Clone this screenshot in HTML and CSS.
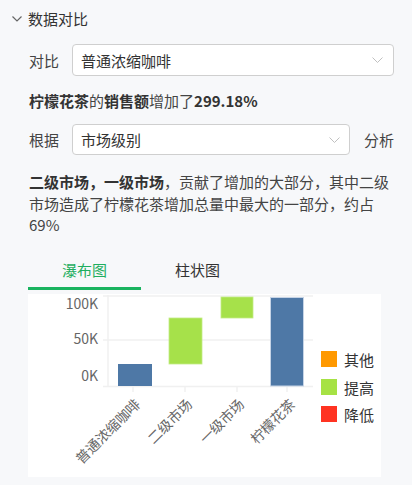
FILE: index.html
```html
<!DOCTYPE html>
<html lang="zh">
<head>
<meta charset="utf-8">
<title>数据对比</title>
<link rel="stylesheet" href="styles.css">
</head>
<body>
<div class="panel">
  <div class="header">
    <svg class="caret" width="10" height="6" viewBox="0 0 10 6"><path d="M0.5 0.5 L5 5 L9.5 0.5" fill="none" stroke="#666" stroke-width="1.2"/></svg>
    <span>数据对比</span>
  </div>

  <div class="row row-first">
    <span class="label">对比</span>
    <div class="select select-wide">
      <span>普通浓缩咖啡</span>
      <svg class="arrow" width="11" height="6" viewBox="0 0 11 6"><path d="M0.5 0.5 L5.5 5.5 L10.5 0.5" fill="none" stroke="#c0c0c0" stroke-width="1"/></svg>
    </div>
  </div>

  <p class="summary"><b>柠檬花茶</b>的<b>销售额</b>增加了<b>299.18%</b></p>

  <div class="row row-second">
    <span class="label">根据</span>
    <div class="select select-narrow">
      <span>市场级别</span>
      <svg class="arrow" width="11" height="6" viewBox="0 0 11 6"><path d="M0.5 0.5 L5.5 5.5 L10.5 0.5" fill="none" stroke="#c0c0c0" stroke-width="1"/></svg>
    </div>
    <span class="suffix">分析</span>
  </div>

  <p class="explain"><b>二级市场，一级市场</b>，贡献了增加的大部分，其中二级市场造成了柠檬花茶增加总量中最大的一部分，约占69%</p>

  <div class="tabs">
    <div class="tab active">瀑布图</div>
    <div class="tab">柱状图</div>
  </div>

  <div class="chart">
    <svg width="353" height="183" viewBox="0 0 353 183">
      <g stroke="#f0f0f0" stroke-width="1.5">
        <line x1="75" y1="2" x2="285" y2="2"/>
        <line x1="75" y1="46" x2="285" y2="46"/>
        <line x1="75" y1="92.5" x2="285" y2="92.5"/>
        <line x1="80" y1="1" x2="80" y2="92"/>
        <line x1="105" y1="92" x2="105" y2="98"/>
        <line x1="157" y1="92" x2="157" y2="98"/>
        <line x1="209" y1="92" x2="209" y2="98"/>
        <line x1="259" y1="92" x2="259" y2="98"/>
      </g>
      <g class="ylab" text-anchor="end" dominant-baseline="central">
        <text x="70" y="9">100K</text>
        <text x="70" y="44">50K</text>
        <text x="70" y="81">0K</text>
      </g>
      <rect x="90" y="70" width="34" height="22" fill="#4e78a6"/>
      <rect x="141" y="24" width="33" height="46" fill="#a6e14a" stroke="#c2ec86" stroke-width="0.8"/>
      <rect x="193" y="3" width="32" height="21" fill="#a6e14a" stroke="#c2ec86" stroke-width="0.8"/>
      <rect x="242.5" y="3.5" width="33" height="88.5" fill="#4e78a6" stroke="#c6d4e6" stroke-width="1"/>
      <g class="xlab" text-anchor="end" dominant-baseline="central">
        <text transform="translate(109 107) rotate(-45)">普通浓缩咖啡</text>
        <text transform="translate(161 107) rotate(-45)">二级市场</text>
        <text transform="translate(213 107) rotate(-45)">一级市场</text>
        <text transform="translate(264 107) rotate(-45)">柠檬花茶</text>
      </g>
      <rect x="293" y="57" width="16" height="16" fill="#ff9900"/>
      <rect x="293" y="85" width="16" height="16" fill="#a6e244"/>
      <rect x="293" y="112" width="16" height="16" fill="#ff3322"/>
      <g class="legend" dominant-baseline="central">
        <text x="316" y="65">其他</text>
        <text x="316" y="93">提高</text>
        <text x="316" y="120">降低</text>
      </g>
    </svg>
  </div>
</div>
</body>
</html>
```

FILE: styles.css
```css
html, body {
  margin: 0;
  padding: 0;
  background: #f7f8fa;
}

body {
  font-family: "Noto Sans CJK SC", "Noto Sans", sans-serif;
  font-size: 15px;
  color: #333;
  width: 412px;
  height: 485px;
  overflow: hidden;
}

.panel {
  display: flex;
  flex-direction: column;
}

.header {
  display: flex;
  align-items: center;
  gap: 6px;
  height: 20px;
  margin-top: 9px;
  padding-left: 12px;
  line-height: 20px;
  color: #333;
}

.row {
  display: flex;
  align-items: center;
  padding-left: 29px;
}

.row-first {
  margin-top: 15px;
}

.row-second {
  margin-top: 13px;
}

.label {
  width: 43px;
  color: #444;
}

.select {
  box-sizing: border-box;
  display: flex;
  align-items: center;
  justify-content: space-between;
  background: #fff;
  border: 1px solid #cfcfcf;
  border-radius: 4px;
  padding: 0 10px 0 8px;
  color: #333;
}

.select-wide {
  width: 322px;
  height: 32px;
}

.select-narrow {
  width: 278px;
  height: 31px;
  padding-right: 9px;
}

.suffix {
  margin-left: 14px;
  color: #444;
}

.summary {
  margin: 15px 0 0;
  padding-left: 29px;
  line-height: 20px;
  color: #444;
}

.summary b {
  color: #333;
}

.explain {
  margin: 16px 0 0;
  padding: 0 20px 0 29px;
  line-height: 21.5px;
  color: #444;
}

.explain b {
  color: #333;
}

.tabs {
  display: flex;
  margin-top: 16px;
  padding-left: 28px;
}

.tab {
  width: 113px;
  height: 35px;
  line-height: 35px;
  text-align: center;
  border-bottom: 3px solid transparent;
  color: #333;
}

.tab.active {
  color: #1fae5f;
  border-bottom-color: #19b35f;
}

.chart {
  margin: 4px 0 0 28px;
  width: 353px;
  height: 183px;
  background: #fff;
}

.chart svg {
  display: block;
}

.ylab text {
  font-family: "Noto Sans CJK SC", sans-serif;
  font-size: 14px;
  fill: #666;
}

.xlab text {
  font-family: "Noto Sans CJK SC", sans-serif;
  font-size: 14px;
  fill: #666;
}

.legend text {
  font-family: "Noto Sans CJK SC", sans-serif;
  font-size: 15px;
  fill: #333;
}
```
